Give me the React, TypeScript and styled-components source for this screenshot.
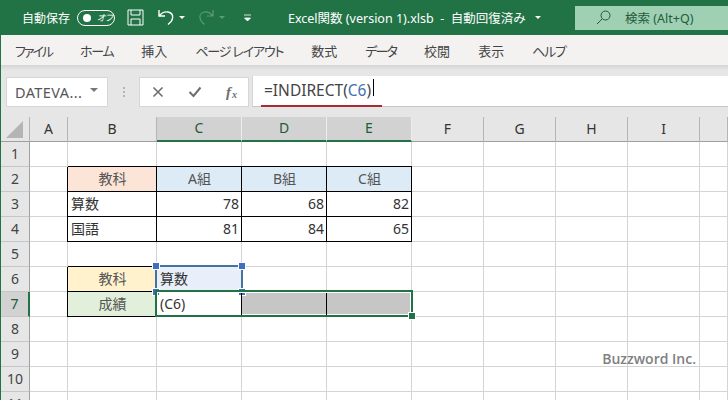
import styled, { createGlobalStyle } from 'styled-components';

const GlobalStyle = createGlobalStyle`
  html, body {
    margin: 0;
    padding: 0;
    background: #fff;
  }
  * {
    box-sizing: border-box;
  }
`;

const font = `'Noto Sans', 'Noto Sans CJK JP', sans-serif`;
const green = '#217346';

// tracking pulls the kana in, the original font sets them narrower
const menus = [
  { label: 'ファイル', tracking: -2 },
  { label: 'ホーム', tracking: -1.3 },
  { label: '挿入', tracking: 0 },
  { label: 'ページ レイアウト', tracking: -1.2 },
  { label: '数式', tracking: 0 },
  { label: 'データ', tracking: -1.8 },
  { label: '校閲', tracking: 0 },
  { label: '表示', tracking: 0 },
  { label: 'ヘルプ', tracking: -1.2 },
];
const columns = ['A', 'B', 'C', 'D', 'E', 'F', 'G', 'H', 'I', ''];
const selectedColumns = ['C', 'D', 'E'];
const rowNumbers = [1, 2, 3, 4, 5, 6, 7, 8, 9, 10, 11];

type CellData = {
  text?: string;
  bg?: string;
  align?: 'left' | 'center' | 'right';
  boxed?: boolean;
  muted?: boolean;
};

// only the cells that hold something, the rest of the sheet is empty
const cells: Record<string, CellData> = {
  B2: { text: '教科', bg: '#fce4d6', align: 'center', boxed: true, muted: true },
  C2: { text: 'A組', bg: '#ddebf7', align: 'center', boxed: true, muted: true },
  D2: { text: 'B組', bg: '#ddebf7', align: 'center', boxed: true, muted: true },
  E2: { text: 'C組', bg: '#ddebf7', align: 'center', boxed: true, muted: true },
  B3: { text: '算数', boxed: true },
  C3: { text: '78', align: 'right', boxed: true },
  D3: { text: '68', align: 'right', boxed: true },
  E3: { text: '82', align: 'right', boxed: true },
  B4: { text: '国語', boxed: true },
  C4: { text: '81', align: 'right', boxed: true },
  D4: { text: '84', align: 'right', boxed: true },
  E4: { text: '65', align: 'right', boxed: true },
  B6: { text: '教科', bg: '#fff2cc', align: 'center', boxed: true, muted: true },
  C6: { text: '算数', bg: '#e8effa' },
  B7: { text: '成績', bg: '#e2efda', align: 'center', boxed: true, muted: true },
  C7: { text: '(C6)' },
  D7: { bg: '#c6c6c6' },
  E7: { bg: '#c6c6c6' },
};

function App() {
  return (
    <Page>
      <GlobalStyle />
      <TitleBar>
        <AutoSave>自動保存</AutoSave>
        <Toggle>
          <ToggleDot />
          <ToggleLabel>オフ</ToggleLabel>
        </Toggle>
        <QuickIcon $left={12} width="17" height="17" viewBox="0 0 17 17">
          <path d="M1 1h15v15H1zM4 1v5h9V1M4 16v-6h9v6" fill="none" stroke="#fff" strokeWidth="1" />
        </QuickIcon>
        <QuickIcon $left={13} width="18" height="17" viewBox="0 0 18 17">
          <path d="M2 1v6h6M2.500 6.500C5 3.500 8 2.500 11 3c3 .6 5 3 4.600 6-.3 2.300-1.800 4.500-4.600 6.500" fill="none" stroke="#fff" strokeWidth="1.400" />
        </QuickIcon>
        <Caret $left={4} />
        <QuickIcon $left={13} width="17" height="17" viewBox="0 0 17 17">
          <path d="M15 1v6H9M14.500 6.500C12 3.500 9 2.500 6.500 3 3.500 3.600 1.500 6 2 9c.3 2.300 1.800 4.500 4.500 6.500" fill="none" stroke="#5c9a78" strokeWidth="1.200" />
        </QuickIcon>
        <Caret $left={4} $dim />
        <MoreIcon width="8" height="8" viewBox="0 0 8 8">
          <path d="M0 1h7M0.500 4h6L3.500 7z" fill="#fff" stroke="#fff" strokeWidth="0.800" />
        </MoreIcon>
        <FileName>Excel関数 (version 1).xlsb&nbsp; -&nbsp; 自動回復済み</FileName>
        <Caret $left={6} />
        <SearchBox>
          <svg width="15" height="15" viewBox="0 0 15 15">
            <circle cx="9.500" cy="5.500" r="4.500" fill="none" stroke="#1f5c3b" strokeWidth="1" />
            <path d="M6 9l-5 5" stroke="#1f5c3b" strokeWidth="1" />
          </svg>
          <SearchText>検索 (Alt+Q)</SearchText>
        </SearchBox>
      </TitleBar>

      <MenuBar>
        {menus.map((m) => (
          <MenuItem key={m.label} $tracking={m.tracking}>
            {m.label}
          </MenuItem>
        ))}
      </MenuBar>

      <FormulaBar>
        <NameBox>
          <span>DATEVA...</span>
          <NameCaret />
        </NameBox>
        <Grip>
          <i />
          <i />
          <i />
        </Grip>
        <FormulaButtons>
          <svg width="12" height="12" viewBox="0 0 12 12">
            <path d="M1.500 1.500l9 9M10.500 1.500l-9 9" stroke="#6e6e6e" strokeWidth="1.600" />
          </svg>
          <svg width="14" height="12" viewBox="0 0 14 12">
            <path d="M1.500 6l4 4 7-8.500" fill="none" stroke="#6e6e6e" strokeWidth="2" />
          </svg>
          <FxLabel>
            f<sub>x</sub>
          </FxLabel>
        </FormulaButtons>
        <FormulaInput>
          =INDIRECT(<RefText>C6</RefText>)<Cursor />
          <RedLine />
        </FormulaInput>
      </FormulaBar>

      <Sheet>
        <Corner>
          <svg width="17" height="17" viewBox="0 0 17 17">
            <path d="M17 0v17H0z" fill="#b4b4b4" />
          </svg>
        </Corner>
        {columns.map((c) => (
          <ColumnHeader key={c || 'rest'} $selected={selectedColumns.includes(c)}>
            {c}
          </ColumnHeader>
        ))}
        {rowNumbers.map((r) => (
          <RowGroup key={r} r={r} />
        ))}
        <BlueRange>
          <Handle $blue $x="left" $y="top" />
          <Handle $blue $x="right" $y="top" />
          <Handle $blue $x="left" $y="bottom" />
          <Handle $blue $x="right" $y="bottom" />
        </BlueRange>
        <GreenRange>
          <Handle $x="right" $y="bottom" />
        </GreenRange>
        <CellDivider />
        <Watermark>Buzzword Inc.</Watermark>
      </Sheet>
    </Page>
  );
}

function RowGroup({ r }: { r: number }) {
  return (
    <>
      <RowHeader $selected={r === 7}>{r}</RowHeader>
      {columns.map((c) => {
        const cell = cells[`${c}${r}`] || {};
        return (
          <Cell key={c || 'rest'} $bg={cell.bg} $align={cell.align} $boxed={cell.boxed} $muted={cell.muted}>
            {cell.text}
          </Cell>
        );
      })}
    </>
  );
}

export default App;

const Page = styled.div`
  width: 728px;
  height: 400px;
  overflow: hidden;
  display: flex;
  flex-direction: column;
  position: relative;
  font-family: ${font};
  font-feature-settings: 'palt';
  background: #fff;

  &::after {
    content: '';
    position: absolute;
    left: 0;
    top: 35px;
    bottom: 0;
    width: 1px;
    background: ${green};
    z-index: 5;
  }
`;

const TitleBar = styled.div`
  height: 35px;
  flex: none;
  display: flex;
  align-items: center;
  padding-left: 22px;
  background: ${green};
  color: #fff;
`;

const AutoSave = styled.span`
  font-size: 12px;
  width: 55px;
  flex: none;
  white-space: nowrap;
`;

const Toggle = styled.div`
  width: 38px;
  height: 16px;
  flex: none;
  border: 1px solid #fff;
  border-radius: 8px;
  display: flex;
  align-items: center;
  padding-left: 5px;
`;

const ToggleDot = styled.span`
  width: 8px;
  height: 8px;
  border-radius: 50%;
  background: #fff;
`;

const ToggleLabel = styled.span`
  font-size: 9px;
  font-style: italic;
  margin-left: 6px;
  white-space: nowrap;
`;

const QuickIcon = styled.svg<{ $left: number }>`
  margin-left: ${({ $left }) => $left}px;
  flex: none;
`;

const Caret = styled.span<{ $left: number; $dim?: boolean }>`
  margin-left: ${({ $left }) => $left}px;
  flex: none;
  width: 0;
  height: 0;
  border-left: 3px solid transparent;
  border-right: 3px solid transparent;
  border-top: 3px solid ${({ $dim }) => ($dim ? '#5c9a78' : '#fff')};
`;

const MoreIcon = styled.svg`
  margin-left: 19px;
  flex: none;
`;

const FileName = styled.span`
  margin-left: 36px;
  width: 241px;
  flex: none;
  font-size: 12.500px;
  white-space: nowrap;
`;

const SearchBox = styled.div`
  margin-left: 34px;
  height: 24px;
  flex: 1;
  display: flex;
  align-items: center;
  padding-left: 21px;
  background: #9fd0b3;
  color: #1f5c3b;
`;

const SearchText = styled.span`
  margin-left: 14px;
  font-size: 12.500px;
  white-space: nowrap;
`;

const MenuBar = styled.div`
  height: 30px;
  flex: none;
  display: flex;
  align-items: center;
  gap: 28px;
  padding-left: 15px;
  background: #f3f2f1;
`;

const MenuItem = styled.span<{ $tracking: number }>`
  font-size: 13px;
  letter-spacing: ${({ $tracking }) => $tracking}px;
  color: #444;
  white-space: nowrap;
`;

const FormulaBar = styled.div`
  height: 52px;
  flex: none;
  display: flex;
  align-items: flex-start;
  padding: 12px 0 0 6px;
  background: linear-gradient(#d4d4d4, #e6e6e6 5px);
`;

const NameBox = styled.div`
  width: 102px;
  height: 30px;
  flex: none;
  display: flex;
  align-items: center;
  justify-content: space-between;
  padding: 0 9px 0 8px;
  background: #fff;
  border: 1px solid #d6d6d6;
  font-size: 14.500px;
  letter-spacing: 0.400px;
  color: #555;
`;

const NameCaret = styled.span`
  width: 0;
  height: 0;
  margin-bottom: 5px;
  border-left: 4px solid transparent;
  border-right: 4px solid transparent;
  border-top: 4px solid #777;
`;

const Grip = styled.div`
  width: 31px;
  height: 30px;
  flex: none;
  display: flex;
  flex-direction: column;
  align-items: center;
  justify-content: center;
  gap: 2px;

  i {
    width: 2px;
    height: 2px;
    background: #b4b4b4;
  }
`;

const FormulaButtons = styled.div`
  width: 110px;
  height: 30px;
  flex: none;
  display: flex;
  align-items: center;
  justify-content: space-between;
  padding: 0 11px 0 12px;
  background: #fff;
  border: 1px solid #d6d6d6;
`;

const FxLabel = styled.span`
  font-family: 'Liberation Serif', serif;
  font-style: italic;
  font-weight: bold;
  font-size: 15px;
  line-height: 1;
  color: #6e6e6e;

  sub {
    font-size: 10px;
    line-height: 0;
    vertical-align: -1px;
    margin-left: 1px;
  }
`;

const FormulaInput = styled.div`
  position: relative;
  flex: 1;
  height: 31px;
  margin: -1px 0 0 3px;
  padding: 3px 0 0 11px;
  display: flex;
  align-items: flex-start;
  line-height: 22px;
  background: #fff;
  border-left: 1px solid #d6d6d6;
  border-bottom: 1px solid #c6c6c6;
  font-size: 15.500px;
  color: #444;
`;

const RefText = styled.span`
  color: #3f6fb5;
`;

const Cursor = styled.span`
  width: 1px;
  height: 17px;
  margin: 0 0 0 2px;
  align-self: flex-start;
  background: #000;
`;

const RedLine = styled.span`
  position: absolute;
  left: 8px;
  top: 29px;
  width: 121px;
  height: 2px;
  background: #a82a32;
`;

const Sheet = styled.div`
  flex: none;
  display: grid;
  grid-template-columns: 30px 38px 89px 85px 85px 85px 72px 72px 72px 72px 28px;
  grid-template-rows: 25px repeat(11, 25px);
  position: relative;
  font-family: ${font};
`;

const Corner = styled.div`
  display: flex;
  align-items: center;
  justify-content: center;
  padding-right: 1px;
  background: #e6e6e6;
  border-bottom: 1px solid #9f9f9f;
  border-right: 1px solid #b4b4b4;
`;

const ColumnHeader = styled.div<{ $selected?: boolean }>`
  display: flex;
  align-items: center;
  justify-content: center;
  padding-bottom: 2px;
  font-size: 14px;
  background: ${({ $selected }) => ($selected ? '#d2d2d2' : '#e6e6e6')};
  color: ${({ $selected }) => ($selected ? '#1d5c3a' : '#333')};
  border-right: 1px solid ${({ $selected }) => ($selected ? '#ededed' : '#b4b4b4')};
  border-bottom: ${({ $selected }) => ($selected ? `2px solid ${green}` : '1px solid #9f9f9f')};
`;

const RowHeader = styled.div<{ $selected?: boolean }>`
  display: flex;
  align-items: center;
  justify-content: center;
  padding: 0 0 2px 1px;
  font-size: 14px;
  background: ${({ $selected }) => ($selected ? '#d2d2d2' : '#e6e6e6')};
  color: ${({ $selected }) => ($selected ? '#1d5c3a' : '#444')};
  border-right: ${({ $selected }) => ($selected ? `2px solid ${green}` : '1px solid #9f9f9f')};
  border-bottom: 1px solid #c6c6c6;
`;

const Cell = styled.div<{ $bg?: string; $align?: string; $boxed?: boolean; $muted?: boolean }>`
  display: flex;
  align-items: center;
  min-width: 0;
  padding: 0 2px 2px 3px;
  font-size: 14px;
  white-space: nowrap;
  position: relative;
  justify-content: ${({ $align }) =>
    $align === 'center' ? 'center' : $align === 'right' ? 'flex-end' : 'flex-start'};
  background: ${({ $bg }) => $bg || '#fff'};
  color: ${({ $muted }) => ($muted ? '#555' : '#333')};
  border-right: 1px solid ${({ $boxed }) => ($boxed ? '#000' : '#d4d4d4')};
  border-bottom: 1px solid ${({ $boxed }) => ($boxed ? '#000' : '#d4d4d4')};
  ${({ $boxed }) => ($boxed ? 'box-shadow: -1px 0 0 #000, 0 -1px 0 #000; z-index: 1;' : '')}
`;

/* absolute children of a grid take their grid-area as containing block */
const BlueRange = styled.div`
  grid-area: 7 / 4 / 8 / 5;
  position: absolute;
  inset: -2px -1px -1px -2px;
  border: 2px solid #45739f;
  z-index: 2;
`;

const GreenRange = styled.div`
  grid-area: 8 / 4 / 9 / 7;
  position: absolute;
  inset: -2px -1px 0 -2px;
  border: 2px solid ${green};
  box-shadow: inset 0 0 0 1px #fff;
  z-index: 2;
`;

const CellDivider = styled.div`
  grid-area: 8 / 5 / 9 / 6;
  position: absolute;
  inset: 1px 0 2px -1px;
  width: 86px;
  border-left: 1px solid #000;
  border-right: 1px solid #000;
  z-index: 3;
`;

const Handle = styled.span<{ $blue?: boolean; $x: 'left' | 'right'; $y: 'top' | 'bottom' }>`
  position: absolute;
  width: 6px;
  height: 6px;
  background: ${({ $blue }) => ($blue ? '#3f6fc0' : green)};
  outline: 1px solid #fff;
  ${({ $x }) => $x}: -4px;
  ${({ $y }) => $y}: -4px;
`;

const Watermark = styled.div`
  position: absolute;
  right: 32px;
  top: 232px;
  font-family: 'Open Sans', sans-serif;
  font-size: 14px;
  font-weight: 600;
  color: #808080;
  z-index: 4;
`;
